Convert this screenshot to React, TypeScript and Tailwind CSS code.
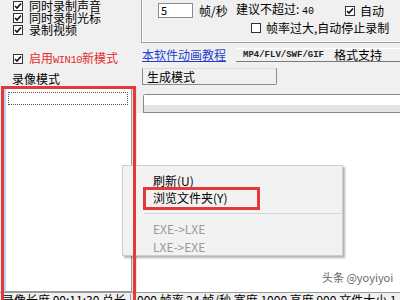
import React from 'react';

const Check: React.FC<{ checked?: boolean }> = ({ checked = true }) => (
  <span className="w-[10px] h-[10px] border border-[#333] bg-white flex items-center justify-center shrink-0">
    {checked && (
      <svg width="8" height="8" viewBox="0 0 8 8">
        <path d="M1 4 L3 6 L7 1.5" fill="none" stroke="#111" strokeWidth="1.6" />
      </svg>
    )}
  </span>
);

const App: React.FC = () => {
  const font = { fontFamily: '"Noto Sans CJK SC", "Noto Sans", sans-serif' };
  return (
    <div className="w-[400px] h-[300px] bg-[#f0f0f0] overflow-hidden relative text-[12px] text-black leading-[12px] flex flex-col" style={font}>
      {/* top section */}
      <div className="flex h-[86px] shrink-0">
        {/* left options */}
        <div className="w-[141px] shrink-0 flex flex-col">
          <div className="flex items-center h-[12px] pl-[13px] gap-[6px]"><Check /><span>同时录制声音</span></div>
          <div className="flex items-center h-[12px] pl-[13px] gap-[6px]"><Check /><span>同时录制光标</span></div>
          <div className="flex items-center h-[12px] pl-[13px] gap-[6px]"><Check /><span>录制视频</span></div>
          <div className="flex items-center h-[12px] pl-[13px] gap-[6px] mt-[17px]">
            <Check />
            <span className="text-[#e52b2b] flex items-baseline">
              启用<span className="font-['Liberation_Mono'] text-[10.5px] tracking-[-0.5px]">WIN10</span>新模式
            </span>
          </div>
          <div className="h-[12px] pl-[12px] mt-[8px]">录像模式</div>
        </div>

        {/* right options */}
        <div className="flex-1 flex flex-col">
          <div className="h-[43px] border-l border-b border-[#a0a0a0] shadow-[inset_1px_-1px_0_#fff] flex flex-col">
            <div className="flex items-center h-[15px] mt-[3px] pl-[16px]">
              <div className="w-[35px] h-[15px] bg-white border border-[#8c8c8c] text-[11px] leading-[13px] pl-[2px]">5</div>
              <span className="ml-[6px] w-[37px]">帧/秒</span>
              <span className="w-[109px]">建议不超过: <span className="font-['Liberation_Mono'] text-[10px]">40</span></span>
              <Check />
              <span className="ml-[5px]">自动</span>
            </div>
            <div className="flex items-center h-[12px] mt-[4px] pl-[109px]">
              <Check checked={false} />
              <span className="ml-[5px]">帧率过大,自动停止录制</span>
            </div>
          </div>
          <div className="flex items-center h-[14px] mt-[5px]">
            <span className="ml-[1px] w-[94px] text-[#1f3fcc] underline">本软件动画教程</span>
            <div className="flex-1 h-[14px] flex items-center pl-[7px] border-b border-[#7a7a7a] border-t border-t-white">
              <span className="font-['Liberation_Mono'] text-[9px] font-bold text-[#222]">MP4/FLV/SWF/GIF</span>
              <span className="ml-[10px]">格式支持</span>
            </div>
          </div>
          <div className="mt-[6px] ml-[1px] w-[135px] h-[17px] border border-[#8a8a8a] border-t-[#ddd] rounded-br-[2px] flex items-center pl-[4px]">
            生成模式
          </div>
        </div>
      </div>

      {/* middle section */}
      <div className="flex flex-1 min-h-0">
        <div className="ml-[4px] w-[128px] bg-white border-l-[2px] border-[#b7d4ec] border-r border-r-[#9a9a9a] border-b border-b-[#9a9a9a] pt-[6px] pl-[2px] pr-[3px]">
          <div className="h-[13px] border border-dotted border-[#555]" />
        </div>
        <div className="w-[5px] bg-[#e6e6e6]" />
        <div className="flex-1 flex flex-col">
          <div className="h-[8px]" />
          <div className="ml-[6px] h-[19px] border-t border-l border-b border-[#8a8a8a] rounded-tl-[3px] flex flex-col">
            <div className="h-[10px] bg-white" />
            <div className="flex-1 bg-[#e4e4e4]" />
          </div>
          <div className="flex-1 bg-white" />
        </div>
      </div>

      {/* status bar */}
      <div className="h-[8px] shrink-0 border-t border-[#9a9a9a] flex overflow-hidden pt-[1px]">
        <span className="w-[131px] shrink-0 pl-[2px] whitespace-nowrap overflow-hidden border-r border-[#9a9a9a]">录像长度 00:11:30 总长</span>
        <span className="pl-[6px] whitespace-nowrap">000 帧率 24 帧/秒 宽度 1000 高度 900 文件大小 1.35M</span>
      </div>

      {/* watermark */}
      <div className="absolute left-[322px] top-[271px] text-[11px] text-[#666]">头条 @yoyiyoi</div>

      {/* context menu */}
      <div className="absolute left-[122px] top-[165px] w-[221px] h-[91px] bg-[#f2f2f2] border border-[#cccccc] shadow-[2px_2px_2px_rgba(0,0,0,0.3)] flex flex-col pt-[6px]">
        <div className="h-[19px] flex items-center pl-[30px]">刷新(U)</div>
        <div className="h-[19px] flex items-center pl-[30px]">浏览文件夹(Y)</div>
        <div className="h-[1px] bg-[#d7d7d7] ml-[21px] my-[7px]" />
        <div className="h-[19px] flex items-center pl-[30px] text-[#9a9a9a]">EXE-&gt;LXE</div>
        <div className="h-[19px] flex items-center pl-[30px] text-[#9a9a9a]">LXE-&gt;EXE</div>
      </div>

      {/* red annotations */}
      <div className="absolute left-[1px] top-[86px] w-[135px] h-[230px] border-[3px] border-[#e5383b]" />
      <div className="absolute left-[143px] top-[187px] w-[117px] h-[23px] border-[3px] border-[#e5383b]" />
    </div>
  );
};

export default App;
